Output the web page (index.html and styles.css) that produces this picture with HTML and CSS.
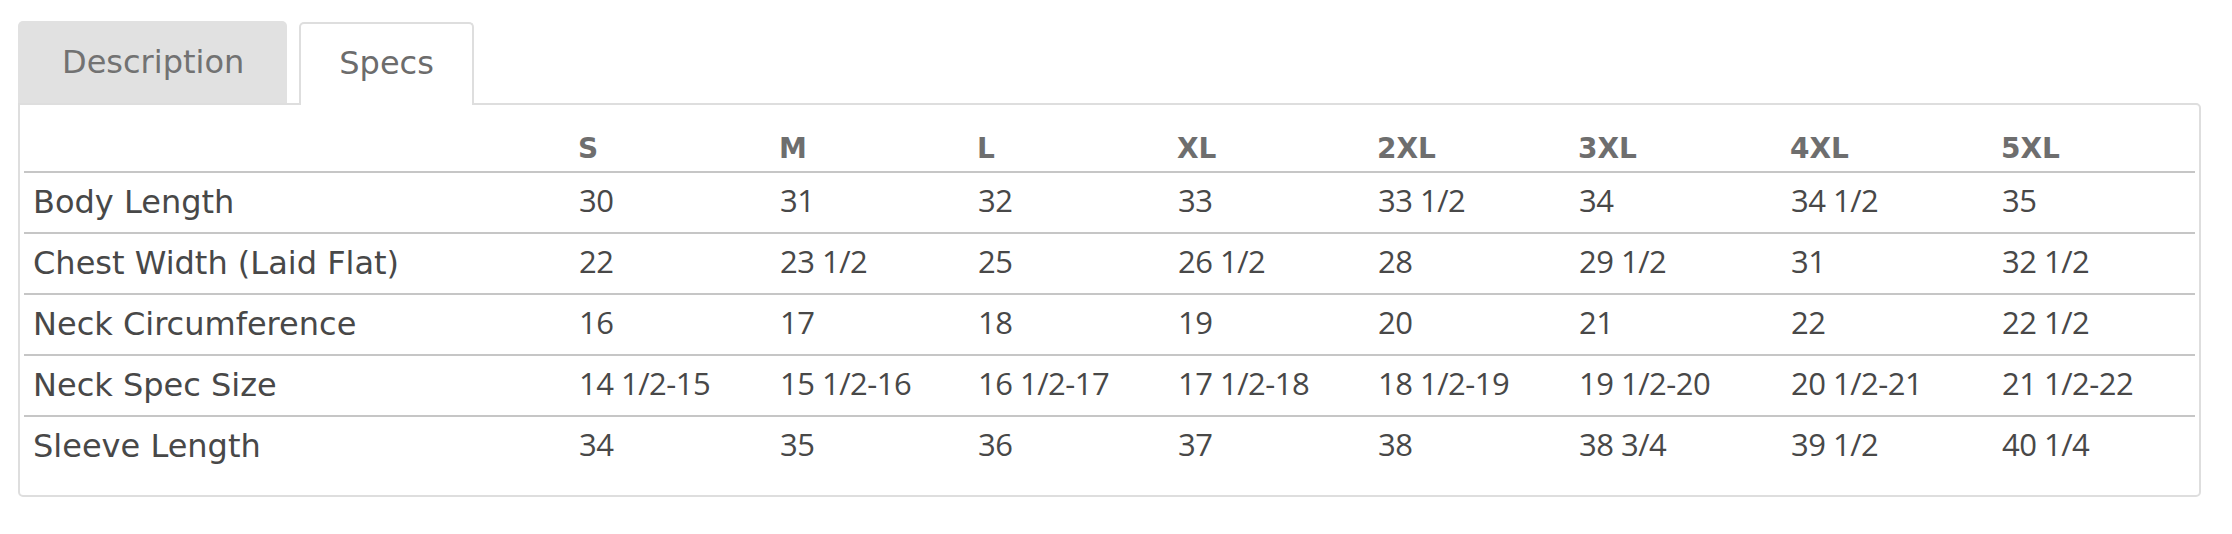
FILE: index.html
```html
<!DOCTYPE html>
<html lang="en">
<head>
<meta charset="utf-8">
<title>Specs</title>
<link rel="stylesheet" href="styles.css">
</head>
<body>
<div class="product-tabs">
  <div class="tab-nav">
    <div class="tab">Description</div>
    <div class="tab tab-active">Specs</div>
  </div>
  <div class="tab-panel">
    <table class="specs">
      <colgroup>
        <col class="c-label"><col class="c-s"><col class="c-m"><col class="c-l"><col class="c-xl"><col class="c-2xl"><col class="c-3xl"><col class="c-4xl"><col class="c-5xl">
      </colgroup>
      <thead>
        <tr><th></th><th>S</th><th>M</th><th>L</th><th>XL</th><th>2XL</th><th>3XL</th><th>4XL</th><th>5XL</th></tr>
      </thead>
      <tbody>
        <tr><td>Body Length</td><td>30</td><td>31</td><td>32</td><td>33</td><td>33 1/2</td><td>34</td><td>34 1/2</td><td>35</td></tr>
        <tr><td>Chest Width (Laid Flat)</td><td>22</td><td>23 1/2</td><td>25</td><td>26 1/2</td><td>28</td><td>29 1/2</td><td>31</td><td>32 1/2</td></tr>
        <tr><td>Neck Circumference</td><td>16</td><td>17</td><td>18</td><td>19</td><td>20</td><td>21</td><td>22</td><td>22 1/2</td></tr>
        <tr><td>Neck Spec Size</td><td>14 1/2-15</td><td>15 1/2-16</td><td>16 1/2-17</td><td>17 1/2-18</td><td>18 1/2-19</td><td>19 1/2-20</td><td>20 1/2-21</td><td>21 1/2-22</td></tr>
        <tr><td>Sleeve Length</td><td>34</td><td>35</td><td>36</td><td>37</td><td>38</td><td>38 3/4</td><td>39 1/2</td><td>40 1/4</td></tr>
      </tbody>
    </table>
  </div>
</div>
</body>
</html>
```
FILE: styles.css
```css
html, body {
  margin: 0;
  padding: 0;
  background: #ffffff;
}

body {
  font-family: "DejaVu Sans", "Open Sans", sans-serif;
  color: #4a4a4a;
}

.product-tabs {
  padding: 21px 31px 0 18px;
}

.tab-nav {
  display: flex;
  align-items: flex-end;
  gap: 12px;
}

.tab {
  height: 82px;
  line-height: 82px;
  padding: 0 43px 0 44px;
  font-size: 32px;
  color: #727272;
  background: #e1e1e1;
  border-radius: 5px 5px 0 0;
  white-space: nowrap;
}

.tab-active {
  position: relative;
  z-index: 1;
  height: 78px;
  line-height: 78px;
  padding: 0 38px 3px 38px;
  margin-bottom: -2px;
  background: #ffffff;
  border: 2px solid #dedede;
  border-bottom: none;
  color: #6c6c6c;
}

.tab-panel {
  border: 2px solid #dedede;
  border-radius: 0 5px 5px 5px;
  padding: 0 4px 19px 4px;
}

.specs {
  width: 100%;
  table-layout: fixed;
  border-collapse: separate;
  border-spacing: 0;
}

.c-label { width: 545px; }
.c-s { width: 201px; }
.c-m { width: 198px; }
.c-l { width: 200px; }
.c-xl { width: 200px; }
.c-2xl { width: 201px; }
.c-3xl { width: 212px; }
.c-4xl { width: 211px; }

.specs th {
  text-align: left;
  vertical-align: bottom;
  font-size: 28px;
  font-weight: 700;
  color: #6e6e6e;
  line-height: 34px;
  padding: 27px 0 5px 9px;
  border-bottom: 2px solid #c6c6c6;
  white-space: nowrap;
}

.specs td {
  text-align: left;
  font-size: 32px;
  line-height: 36px;
  padding: 11px 0 12px 9px;
  color: #484848;
  border-bottom: 2px solid #c6c6c6;
  white-space: nowrap;
}

.specs td:not(:first-child) {
  font-family: "Open Sans", "DejaVu Sans", sans-serif;
  font-size: 31px;
  letter-spacing: -0.5px;
  padding: 9px 0 14px 10px;
}

.specs tbody tr:last-child td {
  border-bottom: none;
}
```
